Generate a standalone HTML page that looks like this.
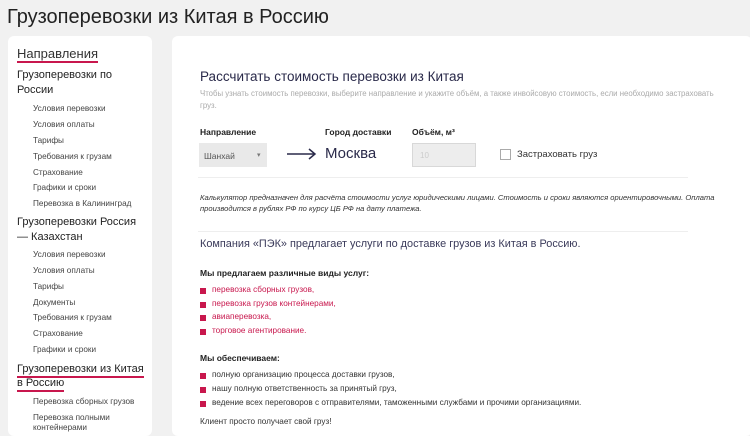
<!DOCTYPE html>
<html><head><meta charset="utf-8"><style>
*{margin:0;padding:0;box-sizing:border-box}
body{width:750px;height:434px;overflow:hidden;background:#f1f1f1;font-family:"Liberation Sans",sans-serif;color:#333;position:relative}
.a{position:absolute;white-space:nowrap}
#title{left:7px;top:6px;font-size:20px;color:#222}
#left{position:absolute;left:8px;top:36px;width:144px;height:400px;background:#fff;border-radius:6px}
#main{position:absolute;left:172px;top:36px;width:580px;height:400px;background:#fff;border-radius:6px}
.h{font-size:11px;color:#222}
.s{font-size:8.2px;color:#444}
.ul{border-bottom:2px solid #c8174d}
.g{font-size:7.8px;color:#aaa}
.b{font-size:8.5px;font-weight:bold;color:#222}
.i{font-size:7.6px;font-style:italic;color:#333}
.li{font-size:8.2px}
.sq{position:absolute;width:6px;height:6px;background:#c8174d}
</style></head><body>
<div class="a" id="title">Грузоперевозки из Китая в Россию</div>
<div id="left"></div>
<div id="main"></div>
<div class="a ul" style="left:17px;top:46px;font-size:13px;color:#333;line-height:15px">Направления</div>
<div class="a h" style="left:17px;top:69px">Грузоперевозки по</div>
<div class="a h" style="left:17px;top:84px">России</div>
<div class="a s" style="left:33px;top:104px">Условия перевозки</div>
<div class="a s" style="left:33px;top:120px">Условия оплаты</div>
<div class="a s" style="left:33px;top:136px">Тарифы</div>
<div class="a s" style="left:33px;top:152px">Требования к грузам</div>
<div class="a s" style="left:33px;top:168px">Страхование</div>
<div class="a s" style="left:33px;top:183px">Графики и сроки</div>
<div class="a s" style="left:33px;top:199px">Перевозка в Калининград</div>
<div class="a h" style="left:17px;top:216px">Грузоперевозки Россия</div>
<div class="a h" style="left:17px;top:231px">— Казахстан</div>
<div class="a s" style="left:33px;top:250px">Условия перевозки</div>
<div class="a s" style="left:33px;top:266px">Условия оплаты</div>
<div class="a s" style="left:33px;top:282px">Тарифы</div>
<div class="a s" style="left:33px;top:298px">Документы</div>
<div class="a s" style="left:33px;top:313px">Требования к грузам</div>
<div class="a s" style="left:33px;top:329px">Страхование</div>
<div class="a s" style="left:33px;top:345px">Графики и сроки</div>
<div class="a h ul" style="left:17px;top:362px;line-height:14px">Грузоперевозки из Китая</div>
<div class="a h ul" style="left:17px;top:377px;line-height:13px">в Россию</div>
<div class="a s" style="left:33px;top:397px">Перевозка сборных грузов</div>
<div class="a s" style="left:33px;top:413px">Перевозка полными</div>
<div class="a s" style="left:33px;top:423px">контейнерами</div>

<div class="a" style="left:200px;top:69px;font-size:13.5px;color:#2a2a4a">Рассчитать стоимость перевозки из Китая</div>
<div class="a g" style="left:200px;top:89px">Чтобы узнать стоимость перевозки, выберите направление и укажите объём, а также инвойсовую стоимость, если необходимо застраховать</div>
<div class="a g" style="left:200px;top:101px">груз.</div>
<div class="a b" style="left:200px;top:127px">Направление</div>
<div class="a b" style="left:325px;top:127px">Город доставки</div>
<div class="a b" style="left:412px;top:127px">Объём, м³</div>
<div class="a" style="left:199px;top:143px;width:68px;height:24px;background:#e9e9e9"></div>
<div class="a" style="left:204px;top:151px;font-size:8.5px;color:#555">Шанхай</div>
<div class="a" style="left:257px;top:151px;font-size:7px;color:#777">▾</div>
<svg class="a" style="left:287px;top:148px" width="30" height="12"><path d="M0 6H28M22 1L28 6L22 11" stroke="#2a2a4a" stroke-width="1.5" fill="none"/></svg>
<div class="a" style="left:325px;top:145px;font-size:15px;color:#2a2a4a">Москва</div>
<div class="a" style="left:412px;top:143px;width:64px;height:24px;background:#ededed;border:1px solid #d8d8d8"></div>
<div class="a" style="left:420px;top:151px;font-size:8px;color:#ccc">10</div>
<div class="a" style="left:500px;top:149px;width:11px;height:11px;border:1px solid #aaa;background:#fff"></div>
<div class="a" style="left:517px;top:149px;font-size:9.5px;color:#333">Застраховать груз</div>
<div class="a" style="left:198px;top:177px;width:490px;height:1px;background:#eee"></div>
<div class="a i" style="left:200px;top:193px">Калькулятор предназначен для расчёта стоимости услуг юридическими лицами. Стоимость и сроки являются ориентировочными. Оплата</div>
<div class="a i" style="left:200px;top:204px">производится в рублях РФ по курсу ЦБ РФ на дату платежа.</div>
<div class="a" style="left:198px;top:231px;width:490px;height:1px;background:#eee"></div>
<div class="a" style="left:200px;top:238px;font-size:10.9px;color:#3a3a5a">Компания «ПЭК» предлагает услуги по доставке грузов из Китая в Россию.</div>
<div class="a b" style="left:200px;top:268px">Мы предлагаем различные виды услуг:</div>
<div class="sq" style="left:200px;top:288px"></div><div class="a li" style="left:212px;top:285px;color:#c8174d">перевозка сборных грузов,</div>
<div class="sq" style="left:200px;top:302px"></div><div class="a li" style="left:212px;top:299px;color:#c8174d">перевозка грузов контейнерами,</div>
<div class="sq" style="left:200px;top:315px"></div><div class="a li" style="left:212px;top:312px;color:#c8174d">авиаперевозка,</div>
<div class="sq" style="left:200px;top:329px"></div><div class="a li" style="left:212px;top:326px;color:#c8174d">торговое агентирование.</div>
<div class="a b" style="left:200px;top:353px">Мы обеспечиваем:</div>
<div class="sq" style="left:200px;top:373px"></div><div class="a li" style="left:212px;top:370px">полную организацию процесса доставки грузов,</div>
<div class="sq" style="left:200px;top:387px"></div><div class="a li" style="left:212px;top:384px">нашу полную ответственность за принятый груз,</div>
<div class="sq" style="left:200px;top:401px"></div><div class="a li" style="left:212px;top:398px">ведение всех переговоров с отправителями, таможенными службами и прочими организациями.</div>
<div class="a li" style="left:200px;top:417px">Клиент просто получает свой груз!</div>
</body></html>
